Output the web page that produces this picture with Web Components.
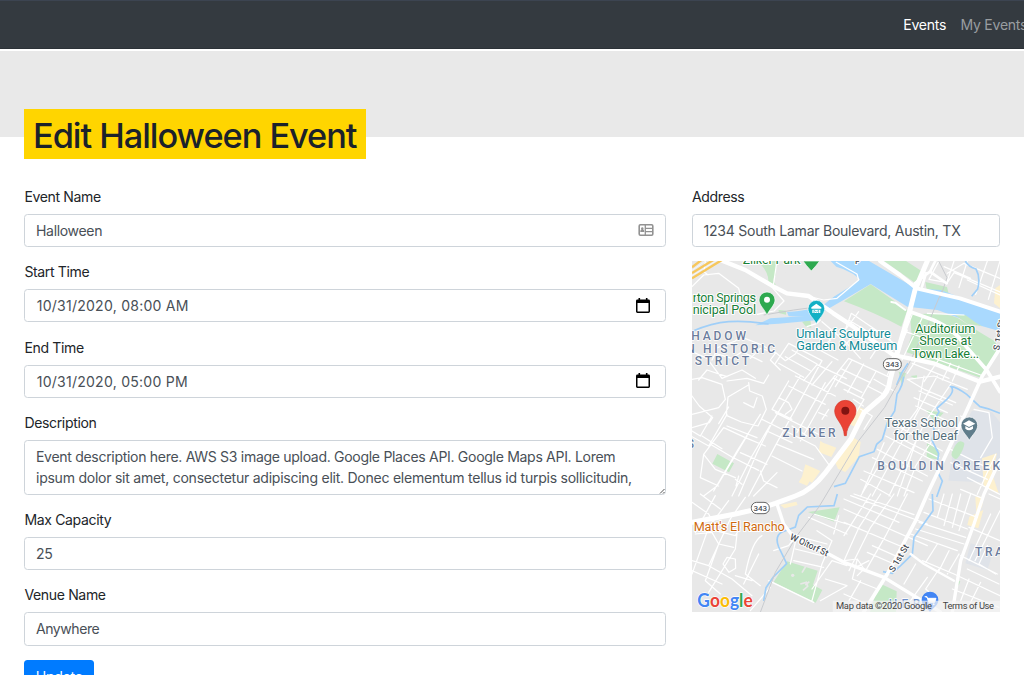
<!DOCTYPE html>
<html lang="en">
<head>
<meta charset="utf-8">
<title>Edit Halloween Event</title>
<style>
html,body{margin:0;height:100%;overflow:hidden;background:#fff}
body{font-family:Inter,"Liberation Sans",sans-serif;font-size:14.06px;line-height:21.1px;color:#212529}
</style>
</head>
<body>
<event-page>
  <site-nav slot="nav"><nav-link active>Events</nav-link><nav-link>My Events</nav-link></site-nav>
  <page-title slot="title">Edit Halloween Event</page-title>
  <form-field slot="main" label="Event Name" icon="card" style="--ls:-.34px">Halloween</form-field>
  <form-field slot="main" label="Start Time" icon="date" style="--ls:.24px;--pad:11.3px">10/31/2020, 08:00 AM</form-field>
  <form-field slot="main" label="End Time" icon="date" style="--ls:.24px;--pad:11.3px">10/31/2020, 05:00 PM</form-field>
  <form-field slot="main" label="Description" area><span style="letter-spacing:-.315px">Event description here. AWS S3 image upload. Google Places API. Google Maps API. Lorem</span><br>ipsum dolor sit amet, consectetur adipiscing elit. Donec elementum tellus id turpis sollicitudin,</form-field>
  <form-field slot="main" label="Max Capacity">25</form-field>
  <form-field slot="main" label="Venue Name" style="--ls:-.45px">Anywhere</form-field>
  <primary-button slot="main">Update</primary-button>
  <form-field slot="side" label="Address">1234 South Lamar Boulevard, Austin, TX</form-field>
  <area-map slot="side"></area-map>
</event-page>
<script>
const define=(name,html,setup)=>customElements.define(name,class extends HTMLElement{
  constructor(){super();this.attachShadow({mode:'open'});}
  connectedCallback(){this.shadowRoot.innerHTML=html;if(setup)setup(this,this.shadowRoot);}
});

define('event-page',`<style>
:host{display:block;height:675px;overflow:hidden}
.hero{height:86px;background:#e9e9e9;margin-top:1.5px;padding:0 24.4px;box-sizing:border-box}
.title{padding-top:58px}
.cols{display:grid;grid-template-columns:641.2px 308px;column-gap:26.4px;padding:0 24.4px;margin-top:48.9px}
</style><slot name="nav"></slot><div class="hero"><div class="title"><slot name="title"></slot></div></div>
<div class="cols"><div><slot name="main"></slot></div><div><slot name="side"></slot></div></div>`);

define('site-nav',`<style>
:host{display:flex;justify-content:flex-end;align-items:center;gap:14.5px;height:49px;background:#343a40;box-shadow:inset 0 1px #3c4451,inset 0 -1px #2c3238}
</style><slot></slot>`);

define('nav-link',`<style>
:host{display:block;color:#999da0;white-space:nowrap;letter-spacing:-.27px}
:host(:last-child){margin-right:-3.2px}
:host([active]){color:#fff}
</style><slot></slot>`);

define('page-title',`<style>
:host{display:block}
h1{margin:0;width:342px;height:50px;box-sizing:border-box;padding-left:8.6px;background:#ffd500;color:#1b222b;font-weight:500;font-size:34.3px;line-height:53px;letter-spacing:-1.02px;white-space:nowrap}
</style><h1><slot></slot></h1>`);

define('form-field',`<style>
:host{display:block;margin-bottom:14.06px}
label{display:block;padding-top:.2px;margin-bottom:6.83px;color:#212529;letter-spacing:-.36px}
.box{display:flex;justify-content:space-between;align-items:center;box-sizing:border-box;height:33.4px;border:1px solid #ced4da;border-radius:3.5px;padding:0 11px 0 var(--pad,10.6px);background:#fff;color:#495057;letter-spacing:var(--ls,-.26px);white-space:nowrap;position:relative}
:host([area]) .box{height:54.5px}
svg{display:block;flex:none}
.grip{position:absolute;right:0;bottom:0}
</style><label></label><div class="box"><span><slot></slot></span></div>`,(el,root)=>{
  root.querySelector('label').textContent=el.getAttribute('label');
  const icons={
    card:`<svg width="16" height="14" viewBox="0 0 16 14"><rect x="1.2" y="1.7" width="13.6" height="10.6" rx="1.2" fill="#fff" stroke="#929292" stroke-width="1.6"/><path d="M7.3 2v10M7.3 5.3H15M7.3 8.7H15" stroke="#929292" stroke-width="1.3"/><path d="M4.3 4.2a1.3 1.3 0 0 1 .8 2.3c.9.3 1.2 1 1.2 2.4h-4c0-1.4.4-2.1 1.2-2.4a1.3 1.3 0 0 1 .8-2.3z" fill="#929292"/></svg>`,
    date:`<svg width="14" height="16" viewBox="0 0 14 16" style="margin-right:3.5px"><path d="M2.5 0h1.6v1.5h5.8V0h1.6v1.5h1.1A1.4 1.4 0 0 1 14 2.9v10.7a1.4 1.4 0 0 1-1.4 1.4H1.4A1.4 1.4 0 0 1 0 13.6V2.900a1.400 1.400 0 0 1 1.400-1.400h1.100zM1.500 5v8.500h11V5z" fill="#000"/></svg>`};
  const box=root.querySelector('.box');
  if(icons[el.getAttribute('icon')])box.insertAdjacentHTML('beforeend',icons[el.getAttribute('icon')]);
  if(el.hasAttribute('area'))box.insertAdjacentHTML('beforeend','<svg class="grip" width="6" height="6"><path d="M1 5.500 5.500 1M4 5.500 5.500 4" stroke="#555"/></svg>');
});

define('primary-button',`<style>
:host{display:block}
button{display:block;font:inherit;height:33.4px;width:69.5px;border:0;border-radius:3.5px;background:#007bff;color:#fff;padding:0;letter-spacing:-.2px}
</style><button><slot></slot></button>`);

define('area-map',`<style>
:host{display:block;width:308px;height:351px;overflow:hidden}
svg{display:block}
text{font-family:Roboto,sans-serif;font-size:38px;stroke:#fff;stroke-width:6;paint-order:stroke;stroke-linejoin:round}
.st path{fill:none;stroke:#fff;stroke-width:3.7;stroke-linejoin:round;stroke-linecap:round}
.maj{fill:none;stroke:#fff;stroke-linejoin:round;stroke-linecap:round}
.hood text{font-weight:500;font-size:36px;fill:#6b7c9c;stroke-width:4}
.green{fill:#188038}.teal{fill:#128b97}
.small text{font-size:27px;fill:#4a4f57;font-weight:500}
.small .shield{font-size:24px;stroke:none}
.plain{stroke:none;font-size:28px}
.logo{font-family:Lato,sans-serif;font-weight:700;font-size:58px;stroke-width:4}
</style>
<svg width="308" height="351" viewBox="0 3 924 1053">
<rect width="924" height="1060" fill="#e8e8e8"/>
<g fill="#dfe3e9"><path d="M840 452l60 5 24 30v110l-50 70-105-5 20-120z"/><path d="M836 850l70 20-20 60-66-20z"/></g>
<g fill="#c5e8c6">
<path d="M195 3h58l-3 82-22-8q8-40-33-74z"/><path d="M536 73l110 78-18 49q-80-42-172-76z"/>
<path d="M576 3h66l50 32-22 34zM700 66l65 15 5 20-65-5z"/>
<path d="M654 165q90-12 142 8l65 42 50 30 8 35-53 73-224-77 17-50z"/>
<path d="M330 185l25-7 3 25-15-2zM260 150l22 2v12l-22-5z"/>
<path d="M620 335l22 4-12 40zM700 450l55 8-25 28zM705 548l35 20-4 30-32-5z"/>
<path d="M76 582l50 28-15 27-50-26zM655 348l20-2v12z"/>
<path d="M348 756l95-14-17 43zM285 904l92 28-14 42 28 16-20 38-126-62zM562 970l52 24-2 62h-78z"/>
<path d="M795 965l10-2-5 14z"/></g>
<path d="M330 938l12-20M325 972l18-5 4 12-14 12M340 975l12-10" stroke="#e8e8e8" stroke-width="5" fill="none"/><circle cx="302" cy="946" r="5" fill="#e8e8e8"/>
<g fill="#a9d9fe"><path d="M416 3h115l140 82 75 5 178 67v57l-68-20q-55-20-120-44l-90-10-110-68-80 47-90 52-76-2-5-13q90-7 114-25l73-60-8-19z"/>
<path d="M235 175l145-9v14l-120 11-70 5z"/></g>
<path d="M400 15q62 5 104 43-15 15-105 68-20-12-110-25-70-40-30-60z" fill="#e8e8e8"/>
<path d="M790 165h30l30 22 20 12-45-8z" fill="#c5e8c6"/>
<g fill="#fdf1cf"><path d="M385 542l8 6 40 15-15 28-38-15zM340 613l45 20-25 35-30-18zM335 642l25 10-15 25-25-10zM476 528l30 18-6 45-40 45-22-10-10-22zM500 440l25 12-30 50-20-8z"/><path d="M265 735l48-10 4 10-40 10zM910 85l14-10v70l-18-15zM870 595l45-15-15 60 20 60-45-20zM850 710h25l-5 30-17 20zM832 770l42-20-15 55-33-10z"/></g>

<g class="st"><path d="M0 80l35-35 45-5 60 45 10 38M48 45l-12-10 4-30M255 0l-12 85 33 38-30 30-50 10M335 105l60 15 40-5 65-55-5-18-62-35M70 265l60-22 15-13 65 25 40 25-15 20 30 30M60 300l10-20 50 15 30-20 60 30M0 275l45 20 45 60 60-25 40 25M20 360l25-30 60 20M175 295l30-30 45 12 30 25 30-20 25-40M380 205l35 35-32 30 55 30M390 185l70 60 45 50M345 200l30-10 10-10"/>
<path d="M250 310l40-60 100 52-32 58M260 310l75 42M280 290l75 42M300 270l75 42M335 362l40-48 88 42M360 375l60-70M395 390l75-95 130 60-45 75M425 355l85 42M445 325l90 43M480 300l-50 80M515 312l-48 85M553 333l-45 80"/>
<path d="M456 260l50-60 20 15 15-10 80 55-25 40M456 220l22-60 118 80M470 180l50 30M500 155l-40 55M500 235l55 30-20 30M660 165l-50 130M690 175l-60 125M640 215l60 20"/></g>
<g class="st" transform="translate(456 0)"><path d="M285 3l-30 55 55 10 20-30 138 58M330 3l-20 60M370 3l-25 80M430 3l-35 100M468 3l-35 115M310 40l50-30 108 45M300 20l80 35M370 60l98 45M190 340l40-60 180 65M240 365l50-75M320 310l-25 50M345 318l-20 45M205 310l110 45M250 160l110 5M130 345l60-135"/></g>
<g class="st" transform="translate(0 348)"><path d="M0 10l30-5 60 20 10 45-20 25-80 20M0 60l22 30 40 35-10 15-52 15M105 15l60-8 50 15 15-25M170 20l3 25 38 15 12 40-25 50-50-12-45-20 5-55 60-35M60 120l-35 60-25-15M105 115l-55 95-50-28M80 143l30-50M155 80l30 15 10-30M105 150l90 35M30 180l60 38M95 155l65 30 60 25M95 155l-60 80M35 235l35 45 60 25M35 235l-10 70 55 25M165 180l-90 150-40 30M205 115l-70 110-70 120M245 130l-65 110-60 120M60 208l60 35 80 40M145 230l80 35M225 165l75 35M290 15l-50 85 60 30M260 65l30 15 10 20-20 15M325 0l-85 140-45 90-55 130M365 0l-110 200-85 160M400 20l-85 150M435 0l-110 195M290 30l110 55M310 0l120 60M250 110l140 70M210 130l160 80 40 55M255 205l110 45M240 240l90 45M205 285l10 30 40 20M255 290l-70 70M300 150l45 30M380 110l25 10M390 130l20-30M130 310l20 15M140 300l-8 30"/></g>
<g class="st" transform="translate(456 348)"><path d="M0 40l60 30-30 50M28 70l30 20M50 100l35 20-25 40M70 30l55 28M90 10l60 35M190 10l80-10 100 40M190 10l50 30 95 40M240 0l-20 100-80 110-90 150M280 0l-60 110-45 85-90 165M320 25l-75 110-110 225M210 65l100 45M215 90l85 40M225 45l100 42M170 155l125 70M155 180l130 65M125 180l145 75M100 220l150 80M85 245l150 70M60 285l150 65M50 310l90 50M120 200l-65 150M225 170l-65 190M285 160l-70 110-35 90M390 100l45 10 10 75-35 60M350 120l50 30M320 220l120 60M320 260l110 50M455 235l-55 120M370 305l98 50M350 340l60 25"/></g>
<g class="st" transform="translate(0 702)"><path d="M0 25l50 35 15 30M25 0l60 45M70 5l-60 110M110 20l-60 80-50 140M160 10l-45 65-65 140M10 120l50-5 20 35 45 10M70 110l60 15 15-25M80 150l-40 110 45 40M135 120l-5 45-80 130M130 195l-25-5-12 20 18 25 20-12zM0 200l50 15 70 40 60 50M0 230l90 40M130 245l50 15M210 125q-30 15-50 115l45 35M200 180l-45 90M300 145l30-15 75 20M310 165l80 20M305 200l90 20M310 145l-15 65M375 110l45 30-30 70-30 110M360 285l60-85 45 15M400 255l65 20M385 320l80-45M350 70l115 50M365 60l100 30M440 65l-15 55M245 170l45-15 25-35M235 280l-60 70M230 260l135 65"/></g>
<g class="st" transform="translate(456 702)"><path d="M0 45l250 110M0 85l190 80M20 5l230 85M30 0l180 62M0 15l165 70M150 0l-70 100-65 130M110 0l-65 100-45 100M80 0l-80 125M190 0l-65 125-60 105M70 175l80 35M85 155l80 35M35 220l40-20M200 120l140 50M215 105l145 45M225 85l140 45M240 55l130 50M255 15l145 55M300 0l-20 70M325 0l-25 95M350 0l-25 100M380 0l-35 110M280 150l-35 55M315 170l-30 60M345 180l-35 60M235 200l95 40M285 225l-40 60 35 30M250 250l-50 70M215 210l-35 60M350 185l110 55M330 240l138 65M325 285l140 55M468 50l-75 150M440 60l-65 140M430 155l-25 55 50 30M375 255l-25 65M410 265l-30 60M370 225l95 45M435 0l33 15M375 100l93 40M0 200l40-5 20 30-20 20M40 195l-15 60 75 30M0 300l90 40M50 260l-35 60"/></g>
<g fill="none" stroke="#a0cff8" stroke-width="5"><path d="M0 214q60-25 110-29t120 7"/><path d="M820 3q10 18 32 24 14 25 5 60l-18 22"/><path d="M648 310l-20 30-14 35"/>
<path d="M635 350q-3 28-20 53l-7 50-22 35-15 50-17 15-8 22-44 15-42 80-34 10"/>
<path d="M924 460q-30-14-60-20l-40-37q-34-24-47-23 15 14-20 45l-22 19 6 12q-20 30-15 55l-6 30 20 40-7 47 18 35-17 48"/>
<path d="M436 702l-10 35-80 4-26 25-10 35-40 15q-23 12-10 45l24 50-40 40-22 32-7 40"/><path d="M721 702l2 50-35 50-22 30-5 50-25 25-35 33-28-5"/></g>
<path d="M784 568q15-35 32-20c6 6-18 57-28 48q-17-8-4-28z" fill="#c5e8c6"/>
<g stroke="#c9cbcf" stroke-width="3" fill="none"><path d="M750 92l-42 100-60 125-70 125-78 100-120 200-65 85-65 110-45 120M215 165l90-15 90-12M740 3l25 50-20 60"/></g>

<g class="maj" stroke-width="13"><path d="M85 0L160 30L245 80L285 100L350 108L424 160L484 200L604 285L724 310L864 365L924 350"/>
<path d="M706 3L669 90L654 150L614 285L594 360Q590 400 560 420L516 458L476 538L400 638Q360 690 310 708L250 730L205 745L130 762L0 787" stroke-width="15"/>
<path d="M564 3L624 45L674 85L804 115L924 155" stroke-width="12"/><path d="M654 155L724 180Q790 210 814 250L884 330L924 395M924 265L871 348L826 448L746 618L706 702L671 782L586 942L536 1022L515 1056" stroke-width="11"/>
<path d="M669 69l45-34 50 35M714 35l16-32M690 80l12-40" stroke-width="8"/><path d="M255 732L275 792L300 825L410 882L456 907L576 952L706 1032L745 1056" stroke-width="10"/><path d="M924 600L876 702L846 792L806 902L781 1056" stroke-width="10"/><path d="M656 882L696 912L786 962" stroke-width="7"/><path d="M640 150l-30-22-12-2" stroke-width="6"/></g>
<g fill="none" stroke="#f7c75b" stroke-width="7"><path d="M0 22L35-5M0 39L72-5M0 55L98-5"/><path d="M0 31L52-5M0 47L85-5" stroke="#fff" stroke-width="2"/></g>

<g fill="#2da94f"><path d="M201 120a24 24 0 0 1 48 0c0 15-16 27-24 45-8-18-24-30-24-45z" stroke="#fff" stroke-width="2"/><circle cx="225" cy="119" r="9" fill="#fff"/><path d="M333 3h50q-9 13-25 30-16-17-25-30z" stroke="#fff" stroke-width="2"/></g>
<path d="M348 146a25 25 0 0 1 50 0c0 17-17 29-25 45-8-16-25-28-25-45z" fill="#12b0c5" stroke="#fff" stroke-width="2"/><path d="M358 142l15-11 15 11v4h-30zM361 149h24v10h-24z" fill="#fff"/><path d="M366 159v-8l7 5 7-5v8" fill="none" stroke="#12b0c5" stroke-width="2"/>
<path d="M807 496a25 25 0 0 1 50 0c0 17-17 29-25 45-8-16-25-28-25-45z" fill="#607d8b" stroke="#fff" stroke-width="2"/><path d="M813 491l18-10 19 10-19 10zM820 498l11 6 12-6v8q-12 10-23 0z" fill="#fff"/>
<path d="M428 453a32 32 0 0 1 64 0c0 25-28 39-29 74h-6c-1-35-29-49-29-74z" fill="#ea4335" stroke="#d33b2d" stroke-width="2"/><circle cx="460" cy="452" r="12" fill="#811411"/>

<g class="green"><text x="152" y="12" textLength="173">Zilker Park</text><text x="2" y="125" textLength="190">rton Springs</text><text x="2" y="163" textLength="190">nicipal Pool</text><g text-anchor="middle"><text x="760" y="219" textLength="180">Auditorium</text><text x="760" y="256" textLength="156">Shores at</text><text x="761" y="293" textLength="200">Town Lake...</text></g></g>
<g class="teal"><text x="313" y="233" textLength="283">Umlauf Sculpture</text><text x="313" y="270" textLength="303">Garden &amp; Museum</text></g>
<g class="hood"><text x="-2" y="241" textLength="164">HADOW</text><text x="-17" y="278" textLength="266">N HISTORIC</text><text x="8" y="315" textLength="163">STRICT</text><text x="271" y="531" textLength="160">ZILKER</text><text x="556" y="629" textLength="368">BOULDIN CREEK</text><text x="849" y="889" textLength="84">TRA</text><text x="-16" y="563">S</text><text x="590" y="1043" textLength="95" style="fill:#6f91cc">HEB</text></g>
<path d="M689 1020a25 25 0 0 1 50 0c0 17-17 24-25 36-8-12-25-19-25-36z" fill="#4285f4"/><path d="M698 1010h7l5 17h18l4-12h-25" fill="#fff" stroke="#fff" stroke-width="3"/><circle cx="711" cy="1033" r="3" fill="#fff"/><circle cx="725" cy="1033" r="3" fill="#fff"/>
<g fill="#546e7a"><text x="578" y="502" textLength="220">Texas School</text><text x="605" y="539" textLength="193">for the Deaf</text></g>
<text x="5" y="813" fill="#cf6a10" textLength="273">Matt's El Rancho</text>
<g stroke="#666" stroke-width="3" fill="#fff"><rect x="574" y="296" width="54" height="34" rx="16"/><rect x="178" y="727" width="54" height="34" rx="16"/></g>
<g class="small"><text transform="translate(292 837) rotate(25)" textLength="124">W Oltorf St</text><text transform="translate(605 938) rotate(-59)" textLength="91">S 1st St</text><text transform="translate(922 272) rotate(-80)">S 1st St</text><text x="489" y="6">p</text>
<text class="shield" x="601" y="322" text-anchor="middle">343</text><text class="shield" x="205" y="753" text-anchor="middle">343</text></g>
<rect x="422" y="1022" width="502" height="34" fill="#f5f5f5" opacity=".7"/>
<g fill="#444"><text class="plain" x="432" y="1048" textLength="288">Map data ©2020 Google</text><text class="plain" x="752" y="1048" textLength="154">Terms of Use</text></g>
<text class="logo" x="16" y="1040" textLength="166" lengthAdjust="spacingAndGlyphs"><tspan fill="#4285f4">G</tspan><tspan fill="#ea4335">o</tspan><tspan fill="#fbbc05">o</tspan><tspan fill="#4285f4">g</tspan><tspan fill="#34a853">l</tspan><tspan fill="#ea4335">e</tspan></text>
</svg>`);
</script>
</body>
</html>
